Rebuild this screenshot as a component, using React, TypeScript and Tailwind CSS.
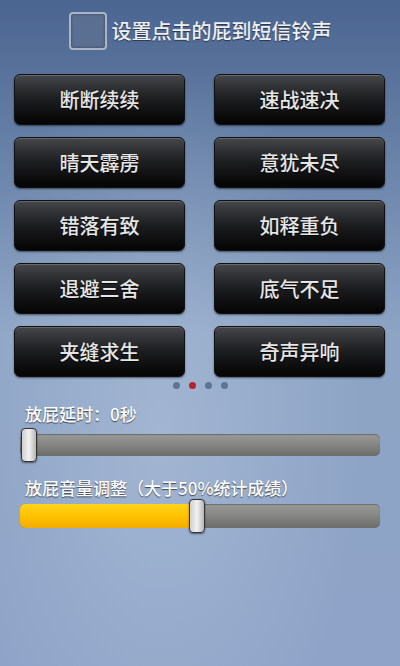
import React from "react";

const buttons = [
  "断断续续",
  "速战速决",
  "晴天霹雳",
  "意犹未尽",
  "错落有致",
  "如释重负",
  "退避三舍",
  "底气不足",
  "夹缝求生",
  "奇声异响",
];

function Slider({ value, trackH }: { value: number; trackH: number }) {
  const pct = value;
  return (
    <div className="relative mx-[20px] h-[34px]">
      <div
        className="absolute left-0 right-0 top-1/2 -translate-y-1/2 overflow-hidden rounded-[5px] bg-gradient-to-b from-[#9a9a98] via-[#858583] to-[#6c6c6a] shadow-[inset_0_1px_1px_rgba(0,0,0,0.3)]"
        style={{ height: trackH }}
      >
        <div
          className="h-full bg-gradient-to-b from-[#ffd21a] via-[#ffc300] to-[#f2ab00]"
          style={{ width: `${pct}%` }}
        />
      </div>
      <div className="absolute top-0 h-[34px]" style={{ left: `calc(${pct}% - ${pct === 0 ? -1 : 2}px)` }}>
        <div className="h-[34px] w-[16px] rounded-[4px] border border-[#333] bg-gradient-to-r from-[#cfcfcf] via-[#f2f2f2] to-[#b5b5b5] shadow-[0_1px_2px_rgba(0,0,0,0.5)]" />
      </div>
    </div>
  );
}

export default function App() {
  return (
    <div
      className="relative h-[666px] w-[400px] overflow-hidden bg-gradient-to-b from-[#4a6590] via-[#8da4c4] to-[#8ea3c7]"
      style={{ fontFamily: '"Noto Sans CJK SC", "Noto Sans", sans-serif' }}
    >
      <div className="pointer-events-none absolute inset-0 bg-[radial-gradient(ellipse_at_40%_65%,rgba(200,215,235,0.35),transparent_60%)]" />
      <div className="relative">
        <div className="flex items-center justify-center gap-[5px] pt-[12px]">
          <div className="h-[38px] w-[38px] rounded-[4px] border-2 border-[#aab4c4] bg-[#5a6f92] shadow-[inset_0_0_3px_rgba(0,0,0,0.4)]" />
          <span className="text-[20px] font-medium leading-none text-[#eef0f4] [text-shadow:0_1px_1px_rgba(0,0,0,0.5)]">
            设置点击的屁到短信铃声
          </span>
        </div>

        <div className="mt-[24px] grid grid-cols-2 gap-x-[29px] gap-y-[12px] px-[14px] pr-[15px]">
          {buttons.map((b) => (
            <div
              key={b}
              className="flex h-[51px] items-center justify-center rounded-[6px] border border-[#111] bg-gradient-to-b from-[#45474b] via-[#1c1d1f] to-[#050505] shadow-[0_1px_2px_rgba(0,0,0,0.5),inset_0_1px_0_rgba(255,255,255,0.18)]"
            >
              <span className="text-[20px] font-medium leading-none text-[#e6e6e6] [text-shadow:0_1px_1px_rgba(0,0,0,0.8)]">
                {b}
              </span>
            </div>
          ))}
        </div>

        <div className="mt-[5px] flex justify-center gap-[9px] pl-[1px]">
          <span className="h-[7px] w-[7px] rounded-full bg-[#5d7590]" />
          <span className="h-[7px] w-[7px] rounded-full bg-[#b8222c]" />
          <span className="h-[7px] w-[7px] rounded-full bg-[#5d7590]" />
          <span className="h-[7px] w-[7px] rounded-full bg-[#5d7590]" />
        </div>

        <div className="mt-[15px] pl-[25px] text-[17px] font-medium leading-[20px] text-white [text-shadow:0_1px_1px_rgba(0,0,0,0.6)]">
          放屁延时：0秒
        </div>
        <div className="mt-[4px]">
          <Slider value={0} trackH={22} />
        </div>

        <div className="mt-[16px] pl-[25px] text-[17px] font-medium leading-[20px] text-white [text-shadow:0_1px_1px_rgba(0,0,0,0.6)]">
          放屁音量调整（大于50%统计成绩）
        </div>
        <div className="mt-[1px]">
          <Slider value={47.5} trackH={24} />
        </div>
      </div>
    </div>
  );
}
